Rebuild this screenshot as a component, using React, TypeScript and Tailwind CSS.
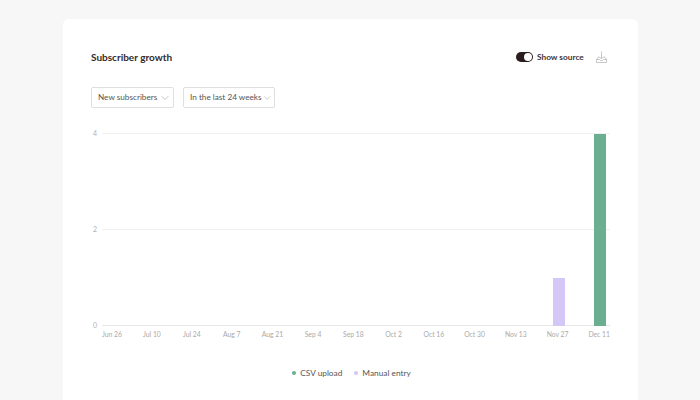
import React from "react";
import { ChevronDown } from "lucide-react";

const labels = ["Jun 26", "Jul 10", "Jul 24", "Aug 7", "Aug 21", "Sep 4", "Sep 18", "Oct 2", "Oct 16", "Oct 30", "Nov 13", "Nov 27", "Dec 11"];

// one column per week, labels sit on every second week
const weeks = Array.from({ length: 25 }, (_, i) => i);

function Select({ label, width }: { label: string; width: string }) {
  return (
    <button className={`flex h-[21px] items-center justify-between whitespace-nowrap rounded-[2px] border border-[#dfdfdf] bg-white pl-[6px] pr-[2px] text-[8.2px] text-[#555] ${width}`}>
      {label}
      <ChevronDown className="h-[12px] w-[12px] text-[#888]" strokeWidth={1} />
    </button>
  );
}

export default function App() {
  return (
    <div className="h-[400px] overflow-hidden bg-[#f7f7f7] pl-[63px] pt-[19px] font-['Lato','Liberation_Sans',sans-serif]">
      <div className="h-[381px] w-[575px] rounded-t-[6px] bg-white pl-[28px] pr-[28px] pt-[31px]">
        <div className="flex h-[14px] items-center justify-between pr-[3px]">
          <h2 className="text-[10px] font-bold text-[#332b2b]">Subscriber growth</h2>
          <div className="flex items-center">
            <span className="flex h-[10px] w-[17px] items-center justify-end rounded-full bg-[#2b1d1d] pr-[1px]">
              <span className="h-[8px] w-[8px] rounded-full bg-white" />
            </span>
            <span className="ml-[4px] w-[47px] whitespace-nowrap text-[8.3px] font-bold text-[#3e3636]">Show source</span>
            <svg className="ml-[12px]" width="11" height="12" viewBox="0 0 11 12" fill="none" stroke="#c0c0c0" strokeWidth="0.9">
              <path d="M5.5 0.5V8M2.9 5.4L5.5 8L8.1 5.4" />
              <path d="M3 6.5H2L0.5 8.5V11.5H10.5V8.5L9 6.5H8" />
              <path d="M0.5 8.5H3.5L4.5 9.5H6.5L7.5 8.5H10.5" />
            </svg>
          </div>
        </div>

        <div className="mt-[23px] flex gap-[9px]">
          <Select label="New subscribers" width="w-[83px]" />
          <Select label="In the last 24 weeks" width="w-[92px]" />
        </div>

        <div className="mt-[25px] flex">
          <div className="flex h-[192px] w-[11px] flex-col justify-between text-[7px] text-[#b0b0b0]">
            <span className="-mt-[5px] h-[10px] pl-[2px] leading-[10px]">4</span>
            <span className="h-[10px] pl-[2px] leading-[10px]">2</span>
            <span className="-mb-[5px] h-[10px] pl-[2px] leading-[10px]">0</span>
          </div>
          <div className="w-[508px]">
            <div className="relative h-[193px]">
              <div className="absolute inset-0 flex flex-col justify-between">
                <div className="h-px bg-[#f0f0f0]" />
                <div className="h-px bg-[#f0f0f0]" />
                <div className="h-px bg-[#e8e8e8]" />
              </div>
              <div className="absolute inset-0 grid grid-cols-[repeat(25,1fr)]">
                {weeks.map((w) => (
                  <div key={w} className="flex items-end justify-center">
                    {w === 22 && <div className="h-[48px] w-[12.5px] bg-[#d4c6f7]" />}
                    {w === 24 && <div className="h-[192px] w-[12.5px] bg-[#6bae90]" />}
                  </div>
                ))}
              </div>
            </div>
            <div className="mt-[3px] grid grid-cols-[repeat(25,1fr)] text-[6.8px] text-[#aaaaaa]">
              {weeks.map((w) => (
                <div key={w} className="flex h-[11px] justify-center whitespace-nowrap leading-[11px]">
                  {w % 2 === 0 ? labels[w / 2] : ""}
                </div>
              ))}
            </div>
          </div>
        </div>

        <div className="mt-[27px] flex items-center justify-center gap-[12px] pl-[2px] text-[8.3px] text-[#555]">
          <span className="flex items-center gap-[4px]">
            <span className="h-[4px] w-[4px] rounded-full bg-[#6bae90]" />
            CSV upload
          </span>
          <span className="flex items-center gap-[4px]">
            <span className="h-[4px] w-[4px] rounded-full bg-[#d4c6f7]" />
            Manual entry
          </span>
        </div>
      </div>
    </div>
  );
}
